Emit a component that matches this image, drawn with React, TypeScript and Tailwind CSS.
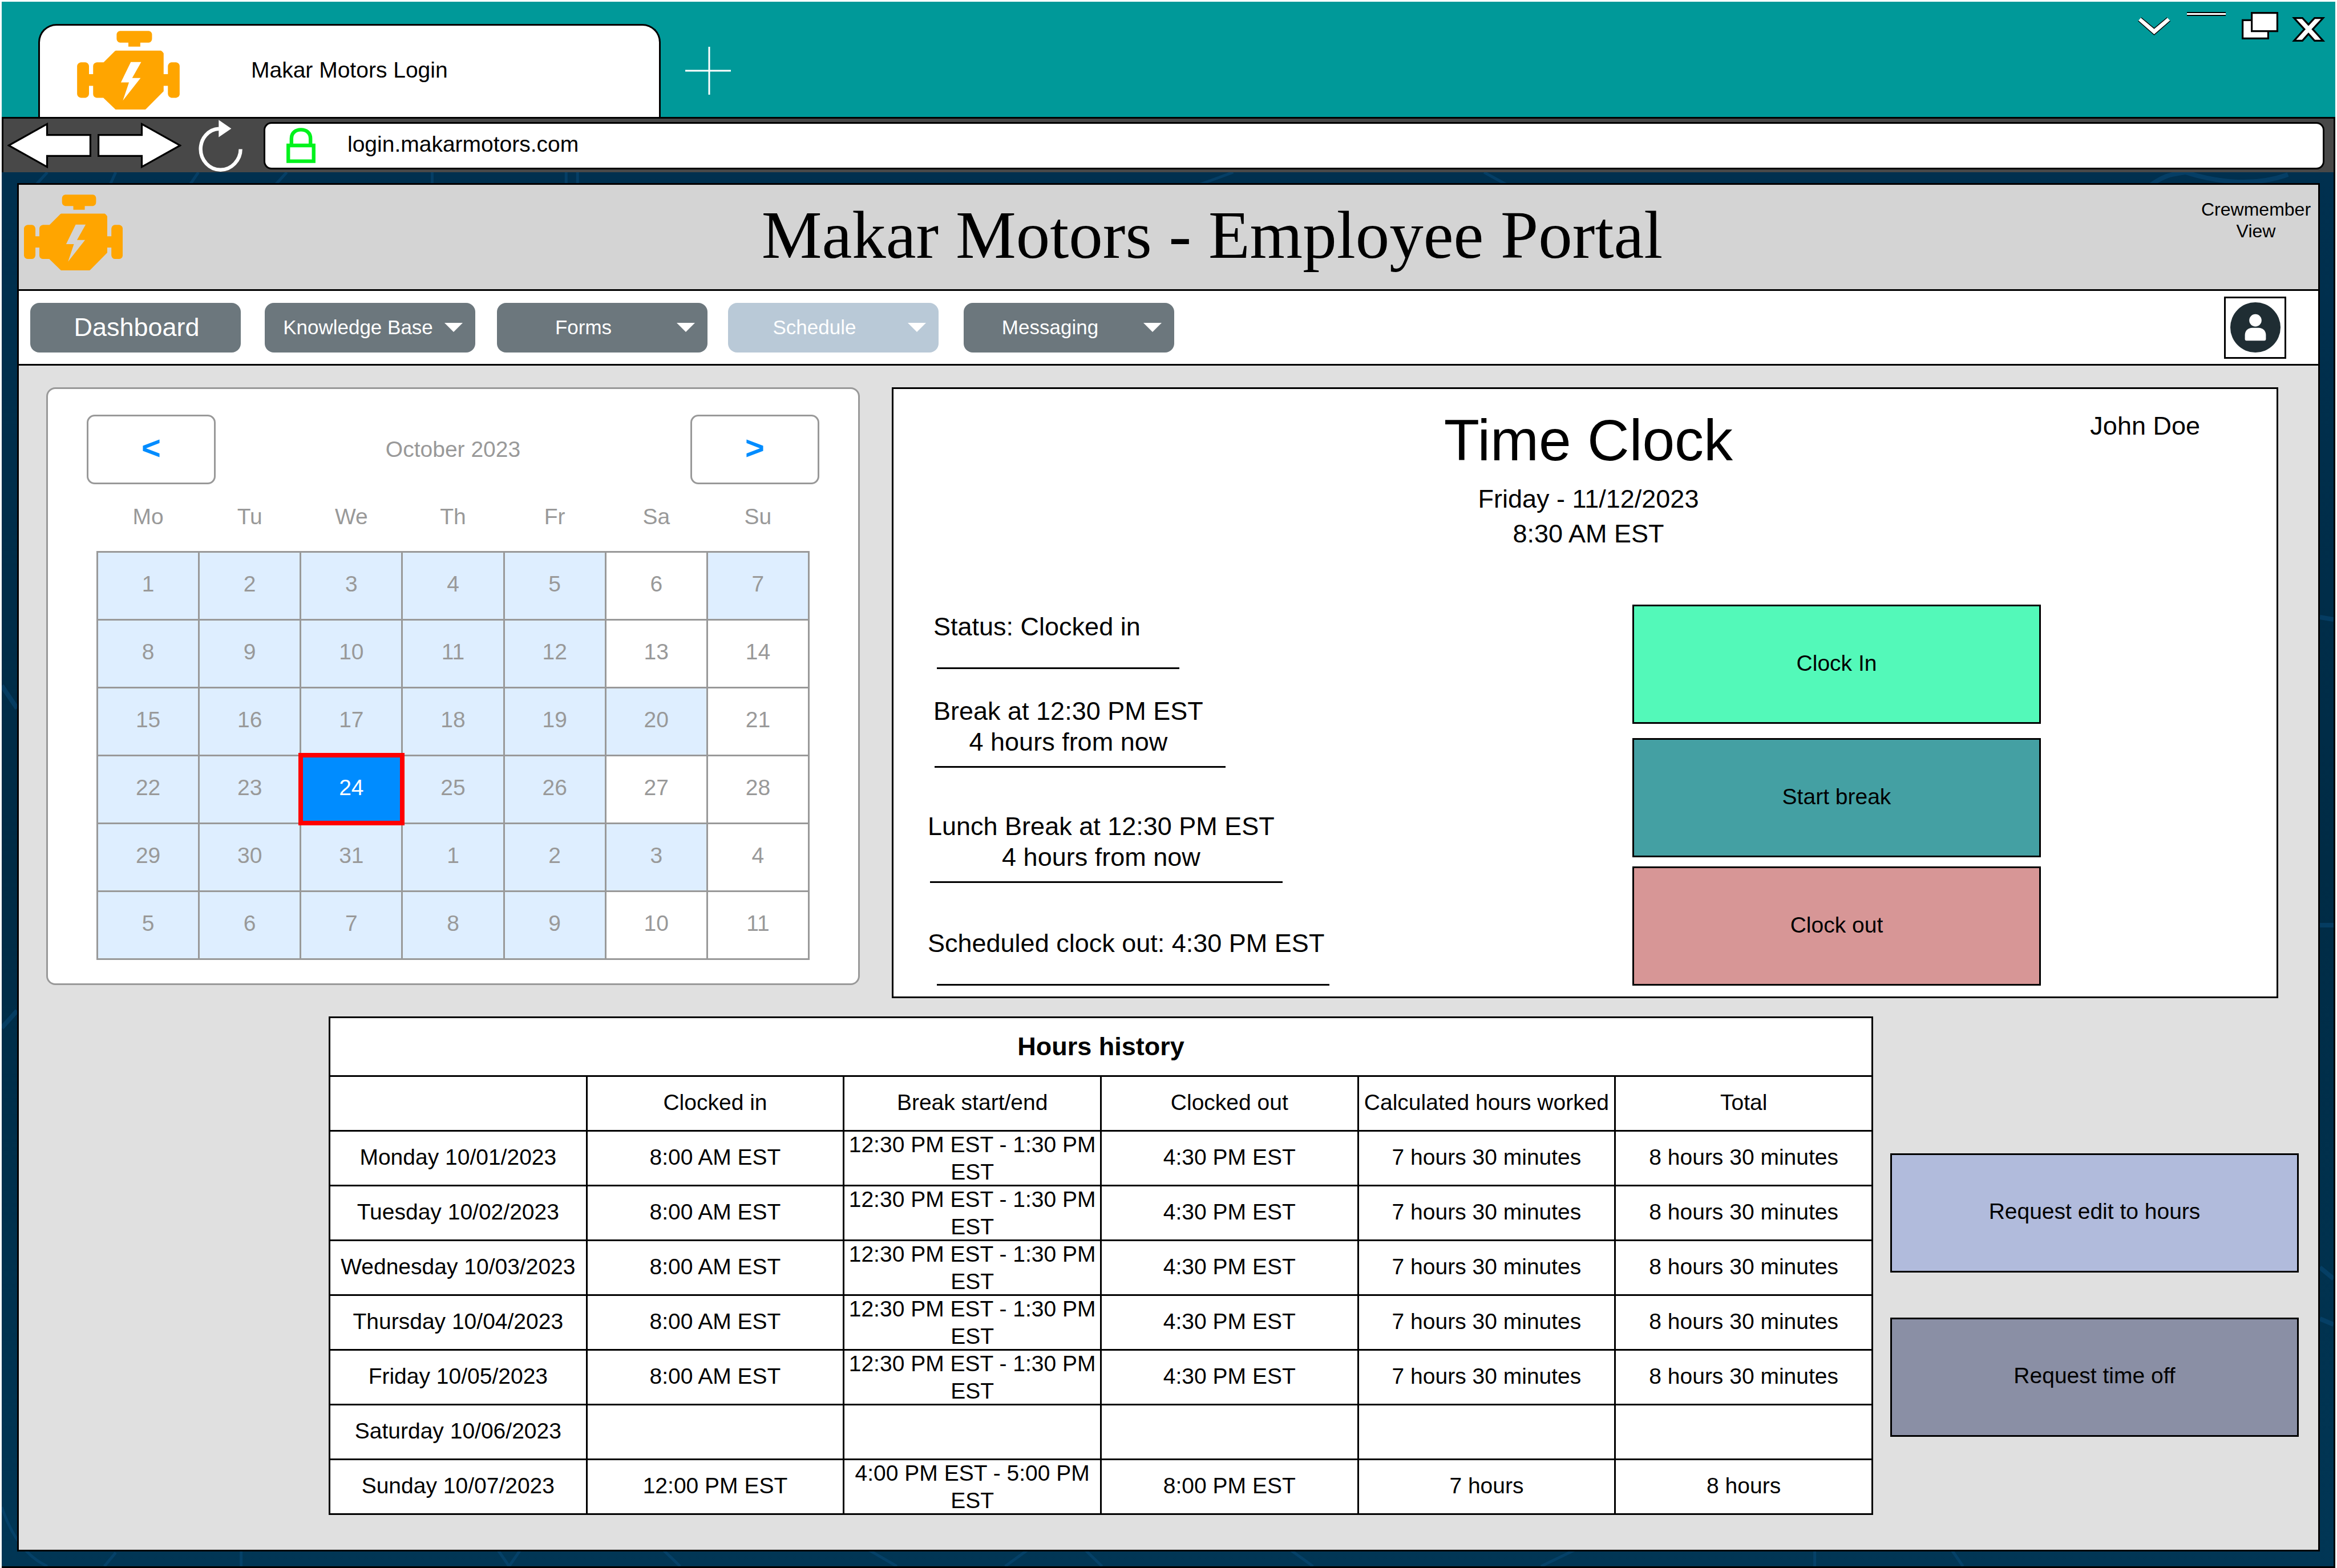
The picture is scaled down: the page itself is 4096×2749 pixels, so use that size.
import React from "react";

const weekdays = ["Mo", "Tu", "We", "Th", "Fr", "Sa", "Su"];

const weeks = [
  [1, 2, 3, 4, 5, 6, 7],
  [8, 9, 10, 11, 12, 13, 14],
  [15, 16, 17, 18, 19, 20, 21],
  [22, 23, 24, 25, 26, 27, 28],
  [29, 30, 31, 1, 2, 3, 4],
  [5, 6, 7, 8, 9, 10, 11],
];

// Weekend shifts, as "week-day" positions in the grid.
const weekendShifts = ["0-6", "2-5", "4-5"];

const hourColumns = ["", "Clocked in", "Break start/end", "Clocked out", "Calculated hours worked", "Total"];

const regular = ["8:00 AM EST", "12:30 PM EST - 1:30 PM EST", "4:30 PM EST", "7 hours 30 minutes", "8 hours 30 minutes"];

const hourRows = [
  ["Monday 10/01/2023", ...regular],
  ["Tuesday 10/02/2023", ...regular],
  ["Wednesday 10/03/2023", ...regular],
  ["Thursday 10/04/2023", ...regular],
  ["Friday 10/05/2023", ...regular],
  ["Saturday 10/06/2023", "", "", "", "", ""],
  ["Sunday 10/07/2023", "12:00 PM EST", "4:00 PM EST - 5:00 PM EST", "8:00 PM EST", "7 hours", "8 hours"],
];

function EngineIcon({ className }: { className: string }) {
  return (
    <svg viewBox="54 51 672 516" className={className} fill="#ffa500" aria-hidden="true">
      <path d="M335 52H524Q545 56 545 78V102Q545 124 524 129H468V155H390V129H335Q313 124 313 102V78Q313 56 335 52Z" />
      <path
        fillRule="evenodd"
        d="M308 181H604Q614 187 621 199V335H649V284Q651 262 672 258H703Q723 262 726 280V468Q723 486 703 490H672Q651 486 649 464V412H621V447L505 564L500 567H306L226 490H182Q161 487 159 467V412H132V464Q130 486 109 490H79Q58 487 54 467V280Q58 262 79 258H109Q130 262 132 284V335H159V281Q161 262 184 258H228L302 184ZM406 256H474L415 360H470L354 508L394 389H341Z"
      />
    </svg>
  );
}

function BackArrow({ className }: { className: string }) {
  return (
    <svg viewBox="16 267 184 102" className={className} aria-hidden="true">
      <path d="M19 318L103 271V295H198V341H103V365Z" fill="#fff" stroke="#000" strokeWidth="4" />
    </svg>
  );
}

function NavMenu({ label, active, inset, gap }: { label: string; active?: boolean; inset?: string; gap: string }) {
  return (
    <button
      type="button"
      className={`flex h-[87px] w-[369px] shrink-0 items-center rounded-2xl pr-[22px] text-[35px] text-white ${gap} ${
        active ? "bg-[#b9c9d7]" : "bg-[#6c777d]"
      }`}
    >
      <span className={`flex-1 text-center whitespace-nowrap ${inset ?? "pr-3"}`}>{label}</span>
      <svg viewBox="0 0 32 16" className="h-4 w-8" aria-hidden="true">
        <path d="M0 0H32L16 16Z" fill="#fff" />
      </svg>
    </button>
  );
}

function BrowserChrome() {
  return (
    <>
      <header className="flex h-[202px] items-end bg-[#009999]">
        <div className="ml-16 flex h-[163px] w-[1091px] items-center rounded-t-[32px] border-[3px] border-b-0 border-black bg-white pb-1 pl-[65px]">
          <EngineIcon className="h-[138px] w-[180px]" />
          <span className="ml-[125px] text-[39px]">Makar Motors Login</span>
        </div>
        <button type="button" aria-label="New tab" className="ml-[43px] flex h-[163px] items-center">
          <svg viewBox="0 0 80 84" className="h-[84px] w-20" aria-hidden="true">
            <path d="M0 42H80M42 0V84" stroke="#fff" strokeWidth="3" />
          </svg>
        </button>
        <div className="mr-[18px] ml-auto flex items-start self-start">
          <button type="button" aria-label="Tab list" className="mt-[27px]">
            <svg viewBox="44 116 212 118" className="h-8 w-[57px]" aria-hidden="true">
              <path d="M46 140L65 118L150 189L235 118L255 140L150 231Z" fill="#fff" />
              <path d="M65 118L150 189L235 118M46 140L150 231L255 140" fill="none" stroke="#000" strokeWidth="5" />
            </svg>
          </button>
          <button type="button" aria-label="Minimise" className="mt-[18px] ml-[29px]">
            <svg viewBox="0 0 68 7" className="h-[7px] w-[68px]" aria-hidden="true">
              <path d="M0 0H68V7H0Z" fill="#000" />
              <path d="M0 2H68V5H0Z" fill="#fff" />
            </svg>
          </button>
          <button type="button" aria-label="Restore" className="mt-[18px] ml-7">
            <svg viewBox="0 0 80 60" className="h-12 w-16" aria-hidden="true">
              <path d="M2 18H58V58H2Z" fill="#fff" stroke="#000" strokeWidth="4" />
              <path d="M22 2H78V42H22Z" fill="#fff" stroke="#000" strokeWidth="4" />
            </svg>
          </button>
          <button type="button" aria-label="Close" className="mt-[27px] ml-6">
            <svg viewBox="1049 113 218 161" className="h-[43px] w-[58px]" aria-hidden="true">
              <path
                d="M1063 119H1118L1158 162L1198 119H1254L1186 193L1254 268H1198L1158 223L1118 268H1063L1131 193Z"
                fill="#fff"
                stroke="#000"
                strokeWidth="12"
              />
            </svg>
          </button>
        </div>
      </header>
      <div className="flex h-[97px] items-center border-x-[3px] border-t-[3px] border-black bg-[#484848] pr-4 pl-[7px]">
        <button type="button" aria-label="Back">
          <BackArrow className="h-[82px] w-[147px]" />
        </button>
        <button type="button" aria-label="Forward" className="ml-[11px]">
          <BackArrow className="h-[82px] w-[147px] rotate-180" />
        </button>
        <button type="button" aria-label="Reload" className="ml-[30px]">
          <svg viewBox="102 9 288 342" className="h-[91px] w-[77px]" aria-hidden="true">
            <path d="M378 203C378 275 318 339 246 339C172 339 115 275 115 203C115 132 166 71 236 68" fill="none" stroke="#fff" strokeWidth="24" />
            <path d="M234 10L317 67L234 124Z" fill="#fff" />
          </svg>
        </button>
        <div className="ml-[37px] flex h-[83px] min-w-0 flex-1 items-center rounded-[14px] border-[3px] border-black bg-white pl-[37px]">
          <svg viewBox="678 66 192 234" className="h-[62px] w-[51px] shrink-0" fill="none" stroke="#00f21c" strokeWidth="24" aria-hidden="true">
            <path d="M690 183H858V287H690ZM711 176V138C711 98 740 79 774 79C808 79 837 98 837 138V176" />
          </svg>
          <input
            aria-label="Address"
            defaultValue="login.makarmotors.com"
            className="ml-14 min-w-0 flex-1 bg-transparent pb-1 text-[39px] outline-none"
          />
        </div>
      </div>
    </>
  );
}

function PortalHeader() {
  return (
    <>
      <header className="flex h-[186px] items-start border-b-[3px] border-black bg-[#d4d4d4] pr-[13px] pl-[9px]">
        <EngineIcon className="mt-[17px] h-[133px] w-[173px] shrink-0" />
        <h1 className="flex-1 self-center pb-2 pl-[176px] text-center font-[Liberation_Serif,serif] text-[119px] leading-[136px]">
          Makar Motors - Employee Portal
        </h1>
        <p className="mt-6 w-48 shrink-0 text-center text-[32px] leading-[38px]">Crewmember View</p>
      </header>
      <nav className="flex h-[131px] items-center border-b-[3px] border-black bg-white pl-5">
        <button type="button" className="h-[87px] w-[369px] shrink-0 rounded-2xl bg-[#6c777d] pl-1 text-[45px] text-white">
          Dashboard
        </button>
        <NavMenu label="Knowledge Base" gap="ml-[42px]" inset="pl-3" />
        <NavMenu label="Forms" gap="ml-[38px]" />
        <NavMenu label="Schedule" gap="ml-[36px]" active />
        <NavMenu label="Messaging" gap="ml-[44px]" />
        <button
          type="button"
          aria-label="Profile"
          className="mr-14 ml-auto flex size-[109px] items-center justify-center border-[3px] border-black bg-white"
        >
          <svg viewBox="0 0 110 110" className="size-[88px]" aria-hidden="true">
            <circle cx="55" cy="55" r="55" fill="#1f2d33" />
            <circle cx="55" cy="39.5" r="13.5" fill="#fff" />
            <path d="M32 72C32 62 39 56 48 56H62C71 56 78 62 78 72V81Q78 84 75 84H35Q32 84 32 81Z" fill="#fff" />
          </svg>
        </button>
      </nav>
    </>
  );
}

function Calendar() {
  const stepper =
    "h-[122px] w-[226px] rounded-[14px] border-[3px] border-[#999] bg-white pb-2 text-[58px] font-bold text-[#008cff]";
  return (
    <section className="self-start rounded-2xl border-[3px] border-[#999] bg-white pt-[45px] pb-[41px] text-[39px] text-[#999]">
      <div className="flex items-center justify-between px-[68px]">
        <button type="button" aria-label="Previous month" className={stepper}>
          &lt;
        </button>
        <h2>October 2023</h2>
        <button type="button" aria-label="Next month" className={stepper}>
          &gt;
        </button>
      </div>
      <div className="px-[85px]">
        <table className="w-full table-fixed border-collapse text-center">
          <thead>
            <tr>
              {weekdays.map((day) => (
                <th key={day} scope="col" className="h-[118px] p-0 pb-0.5 font-normal">
                  {day}
                </th>
              ))}
            </tr>
          </thead>
          <tbody>
            {weeks.map((week, w) => (
              <tr key={w}>
                {week.map((day, d) => {
                  const selected = w === 3 && d === 2;
                  const shift = d < 5 || weekendShifts.includes(`${w}-${d}`);
                  return (
                    <td
                      key={d}
                      className={`h-[119px] border-[3px] border-[#999] p-0 pb-1 ${
                        selected
                          ? "relative bg-[#008cff] text-white outline-8 -outline-offset-4 outline-[#f00]"
                          : shift
                            ? "bg-[#deeeff]"
                            : "bg-white"
                      }`}
                    >
                      {day}
                    </td>
                  );
                })}
              </tr>
            ))}
          </tbody>
        </table>
      </div>
    </section>
  );
}

function TimeClock() {
  const action = "block h-[209px] w-[716px] border-[3px] border-black pb-1 text-[39px]";
  return (
    <section className="border-[3px] border-black bg-white pt-8 pb-[19px] text-[45px] leading-[61px]">
      <div className="grid grid-cols-[1fr_auto_1fr] pl-3">
        <div className="col-start-2 text-center">
          <h2 className="text-[102px] leading-[116px]">Time Clock</h2>
          <p className="mt-[14px]">Friday - 11/12/2023</p>
          <p>8:30 AM EST</p>
        </div>
        <p className="mt-0.5 mr-[134px] text-right">John Doe</p>
      </div>
      <div className="flex justify-between pr-[413px] leading-[54px]">
        <div className="pt-[106px]">
          <p className="ml-[70px]">Status: Clocked in</p>
          <hr className="mt-11 ml-[76px] h-[3px] w-[425px] border-0 bg-black" />
          <p className="mt-[47px] ml-[70px] w-fit text-center">
            Break at 12:30 PM EST
            <br />4 hours from now
          </p>
          <hr className="mt-[15px] ml-[72px] h-[3px] w-[510px] border-0 bg-black" />
          <p className="mt-[76px] ml-[60px] w-fit text-center">
            Lunch Break at 12:30 PM EST
            <br />4 hours from now
          </p>
          <hr className="mt-[15px] ml-[64px] h-[3px] w-[618px] border-0 bg-black" />
          <p className="mt-[79px] ml-[60px]">Scheduled clock out: 4:30 PM EST</p>
          <hr className="mt-11 ml-[76px] h-[3px] w-[688px] border-0 bg-black" />
        </div>
        <div className="pt-[94px]">
          <button type="button" className={`${action} bg-[#53f9b9]`}>
            Clock In
          </button>
          <button type="button" className={`${action} mt-[25px] bg-[#44a0a3]`}>
            Start break
          </button>
          <button type="button" className={`${action} mt-4 bg-[#d79696]`}>
            Clock out
          </button>
        </div>
      </div>
    </section>
  );
}

function HoursHistory() {
  const cell = "h-24 border-[3px] border-black p-0 font-normal";
  return (
    <table className="w-full table-fixed border-collapse bg-white text-center text-[39px] leading-[48px]">
      <thead>
        <tr>
          <th colSpan={6} scope="colgroup" className="h-[103px] border-[3px] border-black p-0 text-[45px] font-bold">
            Hours history
          </th>
        </tr>
        <tr>
          {hourColumns.map((label) => (
            <th key={label} scope="col" className={`${cell} pb-1 whitespace-nowrap`}>
              {label}
            </th>
          ))}
        </tr>
      </thead>
      <tbody>
        {hourRows.map((row) => (
          <tr key={row[0]}>
            <th scope="row" className={`${cell} pb-1`}>
              {row[0]}
            </th>
            {row.slice(1).map((value, i) => (
              <td key={i} className={cell}>
                <div className={i === 1 ? "-my-1 px-1" : "pb-1"}>{value}</div>
              </td>
            ))}
          </tr>
        ))}
      </tbody>
    </table>
  );
}

// Faint light trails that show round the edge of the portal.
function Backdrop() {
  return (
    <svg
      viewBox="0 0 4090 2444"
      preserveAspectRatio="none"
      className="absolute inset-0 size-full"
      fill="none"
      stroke="#0a5080"
      strokeWidth="5"
      aria-hidden="true"
    >
      <g opacity="0.45">
        <path d="M60 22L80 0M190 22L200 0M330 22L345 0M480 22L500 0M755 0V22M990 0V22M1010 0V22M2100 22L2160 0M2600 0L2640 22" />
        <path d="M3770 22C3790 8 3800 4 3830 0M3830 0C3900 22 3960 22 4010 4" strokeWidth="8" />
        <path d="M0 2340C20 2400 50 2430 80 2444M200 2420L180 2444M420 2415V2444M870 2415L890 2444L910 2415M1160 2415L1190 2444" />
        <path d="M1520 2415L1570 2444M1760 2444L1800 2415M1900 2415L1930 2444M2260 2415L2300 2444M2700 2444L2760 2415M3180 2415V2444M3420 2415L3440 2444" />
        <path d="M4066 780L4090 784M4066 1320H4090M4066 1920L4090 1940M4066 2010L4090 2020M0 900L27 940M0 1500L27 1470" strokeWidth="8" />
      </g>
    </svg>
  );
}

export default function App() {
  return (
    <div className="flex min-h-screen flex-col bg-white px-[3px] pt-[3px] font-[Liberation_Sans,Arial,sans-serif] text-black">
      <BrowserChrome />
      <div className="relative flex flex-1 flex-col border-r-[3px] border-b-[3px] border-black bg-linear-to-b from-[#00304f] via-[#002b45] to-[#013655] pt-[19px] pr-6 pb-[26px] pl-[27px]">
        <Backdrop />
        <div className="relative flex flex-1 flex-col border-[3px] border-black bg-[#e0e0e0]">
          <PortalHeader />
          <main className="pt-[38px] pb-[50px]">
            <div className="grid grid-cols-[1426fr_2430fr] gap-14 pr-[70px] pl-12">
              <Calendar />
              <TimeClock />
            </div>
            <div className="mt-8 flex pr-[34px] pl-[543px]">
              <div className="min-w-0 flex-1">
                <HoursHistory />
              </div>
              <div className="ml-[30px] pt-[240px] text-[39px]">
                <button type="button" className="block h-[209px] w-[716px] border-[3px] border-black bg-[#b1bbdc] pb-1">
                  Request edit to hours
                </button>
                <button type="button" className="mt-[79px] block h-[209px] w-[716px] border-[3px] border-black bg-[#8a8fa5] pb-1">
                  Request time off
                </button>
              </div>
            </div>
          </main>
        </div>
      </div>
    </div>
  );
}
